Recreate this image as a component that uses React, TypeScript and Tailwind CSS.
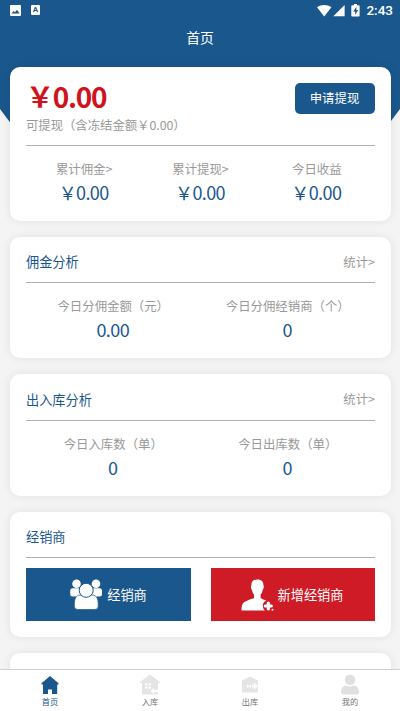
import type { ReactNode } from 'react';

function Card({ className, children }: { className: string; children?: ReactNode }) {
  return (
    <section className={`ml-[10px] mr-[9px] shrink-0 rounded-[10px] bg-white px-4 shadow-[0_0_10px_rgba(0,0,0,0.08)] ${className}`}>
      {children}
    </section>
  );
}

function Stat({ label, value }: { label: string; value: string }) {
  return (
    <div className="flex flex-1 flex-col items-center whitespace-nowrap">
      <span className="text-[12.4px] leading-[18px] text-[#999]">{label}</span>
      <span className="mt-[2px] pr-px text-[18px] leading-[24px] tracking-[-0.6px] text-[#1a578c]">{value}</span>
    </div>
  );
}

function Analysis({ title, stats, tall }: { title: string; stats: [string, string][]; tall?: boolean }) {
  return (
    <Card className={`mt-4 ${tall ? 'h-[122px]' : 'h-[121px]'}`}>
      <div className={`flex items-center justify-between border-b border-[#b0b0b0] pt-[5px] ${tall ? 'h-[47px]' : 'h-[46px]'}`}>
        <h2 className="text-[13.2px] text-[#1a578c]">{title}</h2>
        <span className="text-[12.4px] text-[#999]">统计&gt;</span>
      </div>
      <div className="flex pt-[14px]">
        {stats.map(([label, value]) => (
          <Stat key={label} label={label} value={value} />
        ))}
      </div>
    </Card>
  );
}

function StatusBar() {
  return (
    <div className="flex h-5 shrink-0 items-center justify-between pl-[10px] pr-[7px]">
      <div className="flex gap-[10px]">
        <svg width="11" height="11" viewBox="0 0 11 11">
          <rect width="11" height="11" rx="1" fill="#fff" />
          <path d="M1.5 8.5 3.7 6 5 7.3 7 4.7l2.6 3.8z" fill="#1a578c" />
        </svg>
        <div className="flex h-[10px] w-[9px] items-center justify-center rounded-[1px] bg-white font-[Roboto] text-[8px] font-bold leading-none text-[#1a578c]">A</div>
      </div>
      <div className="flex items-center text-white">
        <svg width="43" height="13" viewBox="0 0 43 13" fill="#fff">
          <path d="M0 3.3C4.2.2 10.2.2 14.4 3.3L7.2 12.4z" />
          <path d="M27.6 1v11.3H16.3z" />
          <path fillRule="evenodd" d="M37 0h3v1.2h1.6q1 0 1 1v9.3q0 1-1 1h-6.3q-1 0-1-1V2.200q0-1 1-1H37zM39.400 2.800l-3.200 4.600h2v3.400l3-4.700h-1.900z" />
        </svg>
        <span className="ml-[6px] font-[Roboto] text-[13.500px] font-medium leading-5">2:43</span>
      </div>
    </div>
  );
}

function PeopleIcon() {
  return (
    <svg width="33" height="31" viewBox="0 0 33 31" fill="#fff">
      <circle cx="6.500" cy="4.700" r="4.300" />
      <circle cx="26" cy="4.700" r="4.300" />
      <rect x="0.200" y="9.300" width="11" height="8.200" rx="2.500" />
      <rect x="21" y="9.300" width="11" height="8.200" rx="2.500" />
      <path d="M8.500 16.200h15.400q4.300 1.500 4.300 8.300v2.700q0 3.300-3.300 3.300H7.700q-3.300 0-3.300-3.300v-2.700q0-6.800 4.100-8.300z" stroke="#1a578c" strokeWidth=".7" />
      <circle cx="16.200" cy="11.300" r="7" stroke="#1a578c" strokeWidth="1" />
    </svg>
  );
}

function AddPersonIcon() {
  return (
    <svg width="33" height="32" viewBox="0 0 33 32" fill="#fff">
      <path d="M16.500.5c4.200 0 6 2.300 6 6 .6.900.3 3-.7 4-.3 2.400-1.300 4-2.200 5v3.500c2 1.700 8 2.500 9.500 5.500l1 7H.5c0-8 2.500-8.500 6.500-10.300 2.500-1 5-1.200 6-2.200v-3.500c-1-1-1.700-2.500-2-4.500-1-1-1.400-3-.7-4.500 0-4 2-6 6.200-6z" />
      <circle cx="28" cy="27" r="6.200" fill="#cf1b26" />
      <path d="M27.300 24v6M24.300 27h6" stroke="#fff" strokeWidth="3.200" strokeLinecap="round" />
      <circle cx="31.500" cy="30.700" r="1" />
    </svg>
  );
}

function TabItem({ label, active, children }: { label: string; active?: boolean; children: ReactNode }) {
  return (
    <div className="flex flex-1 flex-col items-center pt-[4px]">
      <svg width="20" height="21" viewBox="0 0 20 21">{children}</svg>
      <span className={`text-[8.200px] leading-[12px] ${active ? 'text-[#1a578c]' : 'text-[#777]'}`}>{label}</span>
    </div>
  );
}

export default function App() {
  return (
    <div className="flex h-[711px] w-[400px] flex-col overflow-hidden bg-[#f4f4f4] bg-[linear-gradient(#1a578c,#1a578c)] bg-[length:400px_109px] bg-no-repeat font-['Noto_Sans_CJK_SC',sans-serif]">
      <StatusBar />
      <header className="flex h-[47px] shrink-0 items-start justify-center pt-[7px] text-[13.800px] leading-5 text-white">首页</header>
      <main className="relative flex min-h-0 flex-1 flex-col">
        <svg className="absolute left-0 top-[42px]" width="400" height="16" viewBox="0 0 400 16" fill="#1a578c">
          <path d="M0 0h400L388 16H12z" />
        </svg>
        <Card className="relative h-[154px]">
          <div className="flex h-[79px] justify-between border-b border-[#b0b0b0]">
            <div className="whitespace-nowrap">
              <div className="mt-[11px] text-[28px] font-bold leading-[36px] tracking-[-1.300px] text-[#cf1420]">￥0.00</div>
              <div className="mt-[2px] text-[12.400px] leading-[18px] tracking-[-0.050px] text-[#999]">可提现（含冻结金额￥0.00）</div>
            </div>
            <button className="mt-[16px] h-[31px] w-20 rounded-[5px] bg-[#1a578c] pr-px text-[12.400px] text-white">申请提现</button>
          </div>
          <div className="flex pt-[14px]">
            <Stat label="累计佣金>" value="￥0.00" />
            <Stat label="累计提现>" value="￥0.00" />
            <Stat label="今日收益" value="￥0.00" />
          </div>
        </Card>
        <Analysis title="佣金分析" stats={[['今日分佣金额（元）', '0.00'], ['今日分佣经销商（个）', '0']]} />
        <Analysis tall title="出入库分析" stats={[['今日入库数（单）', '0'], ['今日出库数（单）', '0']]} />
        <Card className="mt-4 h-[125px]">
          <h2 className="flex h-[46px] items-center border-b border-[#b0b0b0] pt-[5px] text-[13.200px] text-[#1a578c]">经销商</h2>
          <div className="mt-[10px] flex justify-between text-[13.200px] text-white">
            <button className="flex h-[53px] w-[165px] items-center justify-center gap-[4px] bg-[#1a578c]">
              <PeopleIcon />
              经销商
            </button>
            <button className="flex h-[53px] w-[164px] items-center justify-center gap-[4px] bg-[#cf1b26] pr-[2px]">
              <AddPersonIcon />
              新增经销商
            </button>
          </div>
        </Card>
        <Card className="mt-4 h-[60px]" />
      </main>
      <nav className="relative flex h-[42px] shrink-0 border-t border-[#d0d0d0] bg-white">
        <TabItem label="首页" active>
          <path d="M10 2 1.500 9.300v1.200H3V20h5v-4.500h4V20h5.200v-9.500h1.300V9.300z" fill="#1a578c" />
        </TabItem>
        <TabItem label="入库">
          <path d="M10 .5 0 8v1h2v11.500h16V9h2V8z" fill="#e5e5e5" />
          <path d="M5 9.500h2.500v1.800H5zM8.500 9.500H11v1.800H8.500zM5 12.500h2.500v2H5zM8.500 12.500H11v2H8.500zM10.500 17l3.500-3v2h4v2h-4v2z" fill="#fff" />
        </TabItem>
        <TabItem label="出库">
          <path d="M10 2.500 2 6.500V18.500h16V6.500z" fill="#e5e5e5" />
          <path d="M7 11h1.500v2.500H7zM9.500 11H11v2.500H9.500zM12 10.800h1.800V8.500L18 12l-4.200 3.700v-2.200H12z" fill="#fff" />
        </TabItem>
        <TabItem label="我的">
          <circle cx="10" cy="5.800" r="5.200" fill="#e0e0e0" />
          <path d="M6 11.500q4 2 8 0c3.500.5 5 3.500 5 6.500q0 2.500-2.500 2.500h-13Q1 20.500 1 18c0-3 1.500-6 5-6.500z" fill="#e0e0e0" />
        </TabItem>
      </nav>
    </div>
  );
}
